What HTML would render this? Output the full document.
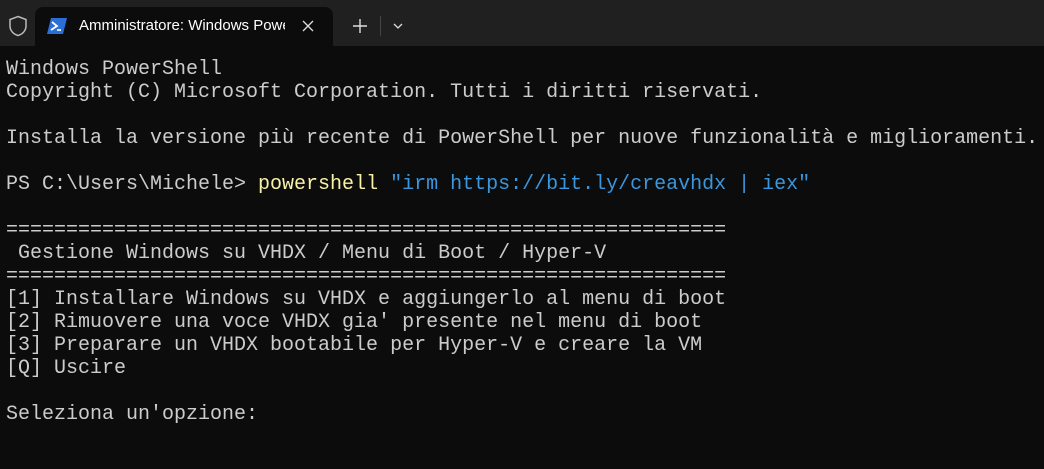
<!DOCTYPE html>
<html><head><meta charset="utf-8"><style>
html,body{margin:0;padding:0;width:1044px;height:469px;overflow:hidden;background:#0c0c0c}
.bar{position:absolute;left:0;top:0;width:1044px;height:46px;background:#202020}
.tab{position:absolute;left:35px;top:7px;width:298px;height:39px;background:#0c0c0c;border-radius:8px 8px 0 0}
.t{position:absolute;font-family:"Liberation Sans",sans-serif;font-size:15px;color:#fff;left:79px;top:17px;white-space:nowrap;width:206px;overflow:hidden}
pre{position:absolute;left:6px;top:58px;margin:0;font-family:"Liberation Mono",monospace;font-size:20px;line-height:23px;color:#cccccc}
.y{color:#f9f1a5}.b{color:#3a96dd}
</style></head><body>
<div class="bar"></div>
<svg style="position:absolute;left:8px;top:15px" width="20" height="22" viewBox="0 0 20 22"><path d="M10 1.5 L18 4.5 V11 C18 16 14 19.5 10 20.5 C6 19.5 2 16 2 11 V4.5 Z" fill="none" stroke="#bbb" stroke-width="1.5"/></svg>
<div class="tab"></div>
<svg style="position:absolute;left:47px;top:18px" width="20" height="16" viewBox="0 0 20 16"><path d="M4 0 H20 L16 16 H0 Z" fill="#2b6fd6"/><path d="M5 4 L10 8 L4 12" stroke="#fff" stroke-width="1.8" fill="none"/><path d="M10 12 H14" stroke="#fff" stroke-width="1.6"/></svg>
<div class="t">Amministratore: Windows PowerShell</div>
<svg style="position:absolute;left:302px;top:20px" width="12" height="12"><path d="M1 1 L11 11 M11 1 L1 11" stroke="#ddd" stroke-width="1.3"/></svg>
<svg style="position:absolute;left:353px;top:19px" width="14" height="14"><path d="M7 0 V14 M0 7 H14" stroke="#ddd" stroke-width="1.4"/></svg>
<div style="position:absolute;left:380px;top:16px;width:1px;height:20px;background:#444"></div>
<svg style="position:absolute;left:393px;top:23px" width="10" height="6"><path d="M1 1 L5 5 L9 1" stroke="#ddd" stroke-width="1.3" fill="none"/></svg>
<pre>Windows PowerShell
Copyright (C) Microsoft Corporation. Tutti i diritti riservati.

Installa la versione più recente di PowerShell per nuove funzionalità e miglioramenti.

PS C:\Users\Michele&gt; <span class="y">powershell</span> <span class="b">"irm https://bit.ly/creavhdx | iex"</span>

============================================================
 Gestione Windows su VHDX / Menu di Boot / Hyper-V
============================================================
[1] Installare Windows su VHDX e aggiungerlo al menu di boot
[2] Rimuovere una voce VHDX gia' presente nel menu di boot
[3] Preparare un VHDX bootabile per Hyper-V e creare la VM
[Q] Uscire

Seleziona un'opzione:</pre>
</body></html>
